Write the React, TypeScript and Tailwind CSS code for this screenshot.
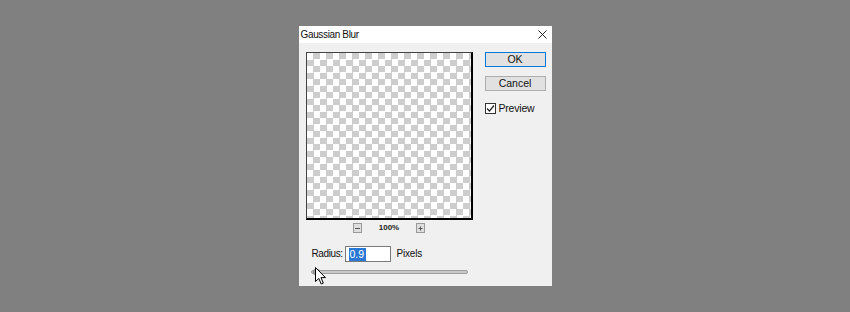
import React from "react";

const font = { fontFamily: '"Liberation Sans", Arial, sans-serif' };

export default function App() {
  return (
    <div
      className="w-[850px] h-[312px] bg-[#808080] flex justify-center pt-[26px] relative"
      style={font}
    >
      <div className="w-[253px] h-[260px] bg-[#f0f0f0] flex flex-col">
        {/* title bar */}
        <div className="h-[17px] bg-white flex items-center justify-between pl-[2px] pr-[5px]">
          <span className="text-[10px] leading-none tracking-[-0.35px] text-[#111]">
            Gaussian Blur
          </span>
          <svg width="9" height="9" viewBox="0 0 9 9" className="mb-[1px]">
            <path d="M0.5 0.5 L8.5 8.5 M8.5 0.5 L0.5 8.5" stroke="#222" strokeWidth="1" />
          </svg>
        </div>
        {/* body */}
        <div className="flex flex-row pl-[7px] pt-[9px] gap-[12px]">
          <div className="w-[167px] flex flex-col">
            <div className="w-[167px] h-[168px] border-t border-l border-t-[#444] border-l-[#444] border-r-2 border-b-2 border-r-black border-b-black bg-white">
              <div className="w-full h-full bg-[repeating-conic-gradient(#cdcdcd_0%_25%,#ffffff_0%_50%)] bg-[length:13px_13px]" />
            </div>
            <div className="h-[10px] mt-[3px] flex items-center justify-center">
              <div className="w-[9px] h-[10px] border border-[#9a9a9a] bg-[#dedede] flex items-center justify-center">
                <div className="w-[5px] h-[1px] bg-[#555]" />
              </div>
              <span className="mx-[17px] text-[8px] font-bold leading-none text-[#222]">100%</span>
              <div className="w-[9px] h-[10px] border border-[#9a9a9a] bg-[#dedede] flex items-center justify-center">
                <svg width="5" height="5" viewBox="0 0 5 5">
                  <path d="M2.5 0.5 V4.5 M0.5 2.5 H4.5" stroke="#555" strokeWidth="1" />
                </svg>
              </div>
            </div>
            <div className="mt-[13px] flex items-center h-[16px] pl-[6px]">
              <span className="text-[10px] leading-none text-[#111] tracking-[-0.4px] w-[33px]">Radius:</span>
              <div className="w-[46px] h-[16px] border border-[#7a7a7a] bg-white flex items-center pl-[3px]">
                <span className="bg-[#2a78d6] text-white text-[10.5px] leading-[13px] px-[1px] w-[17px]">0.9</span>
              </div>
              <span className="ml-[6px] text-[10px] leading-none text-[#111] tracking-[-0.2px]">Pixels</span>
            </div>
            <div className="mt-[8px] ml-[5px] w-[157px] h-[4px] rounded-full bg-[#c9c9c9] border border-[#9c9c9c] relative">
              <div className="absolute left-[1px] top-[-2px] w-[7px] h-[6px] rounded-[2px] bg-[#a8a8a8] border border-[#8a8a8a]" />
            </div>
          </div>
          <div className="w-[61px] flex flex-col">
            <div className="h-[15px] border border-[#0078d7] bg-[#e1e1e1] flex items-center justify-center text-[10.5px] leading-none text-[#111]">
              OK
            </div>
            <div className="mt-[9px] h-[15px] border border-[#adadad] bg-[#e1e1e1] flex items-center justify-center text-[10.5px] leading-none text-[#111]">
              Cancel
            </div>
            <div className="mt-[12px] flex items-center">
              <div className="w-[11px] h-[11px] border border-[#333] bg-white flex items-center justify-center">
                <svg width="9" height="9" viewBox="0 0 9 9">
                  <path d="M1 4.5 L3.5 7 L8 1.5" stroke="#222" strokeWidth="1.2" fill="none" />
                </svg>
              </div>
              <span className="ml-[3px] text-[10.5px] leading-none text-[#111] tracking-[-0.2px]">Preview</span>
            </div>
          </div>
        </div>
      </div>
      {/* mouse cursor */}
      <svg
        className="absolute left-[315px] top-[267px]"
        width="12"
        height="19"
        viewBox="0 0 12 19"
      >
        <path
          d="M0.5 0.5 L0.5 14.5 L3.8 11.4 L6.2 17 L8.3 16.1 L6 10.6 L10.5 10.6 Z"
          fill="white"
          stroke="black"
          strokeWidth="1"
          strokeLinejoin="round"
        />
      </svg>
    </div>
  );
}
